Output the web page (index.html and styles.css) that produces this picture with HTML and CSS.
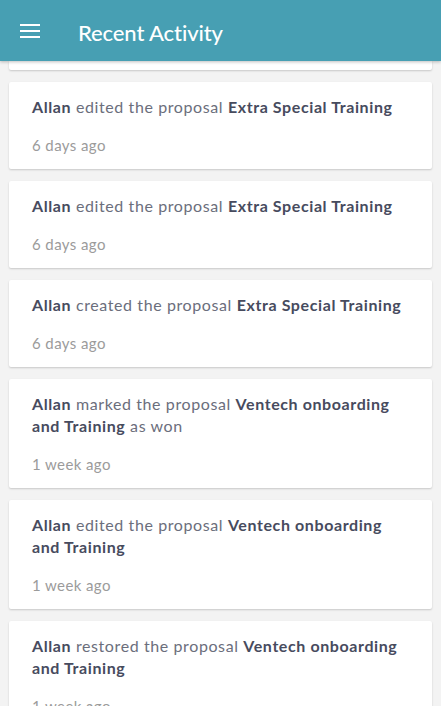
FILE: index.html
```html
<!DOCTYPE html>
<html lang="en">
<head>
  <meta charset="UTF-8" />
  <meta name="viewport" content="width=device-width, initial-scale=1.0" />
  <title>Recent Activity</title>
  <link rel="stylesheet" href="styles.css">
</head>
<body>
  <header class="topbar">
    <button class="menu-btn" aria-label="Menu">
      <svg width="20" height="14" viewBox="0 0 20 14">
        <rect x="0" y="0" width="20" height="2" fill="#fff" />
        <rect x="0" y="6" width="20" height="2" fill="#fff" />
        <rect x="0" y="12" width="20" height="2" fill="#fff" />
      </svg>
    </button>
    <h1>Recent Activity</h1>
  </header>

  <main class="feed">
    <div class="card card-cut"></div>

    <div class="card">
      <p class="line"><b>Allan</b> edited the proposal <b>Extra Special Training</b></p>
      <p class="when">6 days ago</p>
    </div>
    <div class="card">
      <p class="line"><b>Allan</b> edited the proposal <b>Extra Special Training</b></p>
      <p class="when">6 days ago</p>
    </div>
    <div class="card">
      <p class="line"><b>Allan</b> created the proposal <b>Extra Special Training</b></p>
      <p class="when">6 days ago</p>
    </div>
    <div class="card">
      <p class="line"><b>Allan</b> marked the proposal <b>Ventech onboarding and Training</b> as won</p>
      <p class="when">1 week ago</p>
    </div>
    <div class="card">
      <p class="line"><b>Allan</b> edited the proposal <b>Ventech onboarding and Training</b></p>
      <p class="when">1 week ago</p>
    </div>
    <div class="card">
      <p class="line"><b>Allan</b> restored the proposal <b>Ventech onboarding and Training</b></p>
      <p class="when">1 week ago</p>
    </div>
  </main>
</body>
</html>
```

FILE: styles.css
```css
html, body {
  height: 100%;
  overflow: hidden;
}
body {
  margin: 0;
  background: #f3f3f3;
  font-family: Lato, "Open Sans", sans-serif;
}
.topbar {
  position: relative;
  z-index: 2;
  height: 61px;
  background: #479fb3;
  display: flex;
  align-items: center;
  box-shadow: 0 1px 3px rgba(0, 0, 0, 0.25);
}
.menu-btn {
  background: none;
  border: none;
  padding: 0;
  margin-left: 20px;
  display: flex;
}
.topbar h1 {
  margin: 0 0 0 38px;
  color: #fff;
  font-size: 22px;
  font-weight: 500;
  letter-spacing: -0.1px;
  padding-top: 3px;
}
.feed {
  padding: 0 9px;
  display: flex;
  flex-direction: column;
  gap: 12px;
}
.card {
  background: #fff;
  border-radius: 2px;
  box-shadow: 0 1px 2px rgba(0, 0, 0, 0.18);
  padding: 14px 23px 14px;
}
.card-cut {
  height: 9px;
  padding: 0;
  border-radius: 0 0 2px 2px;
}
.line {
  margin: 0;
  font-size: 16px;
  line-height: 22px;
  letter-spacing: 0.6px;
  color: #6b6e7c;
}
.line b {
  color: #474b5e;
  font-weight: 700;
}
.when {
  margin: 17px 0 0;
  font-size: 15px;
  line-height: 20px;
  letter-spacing: 0.4px;
  color: #9b9b9b;
}
```
